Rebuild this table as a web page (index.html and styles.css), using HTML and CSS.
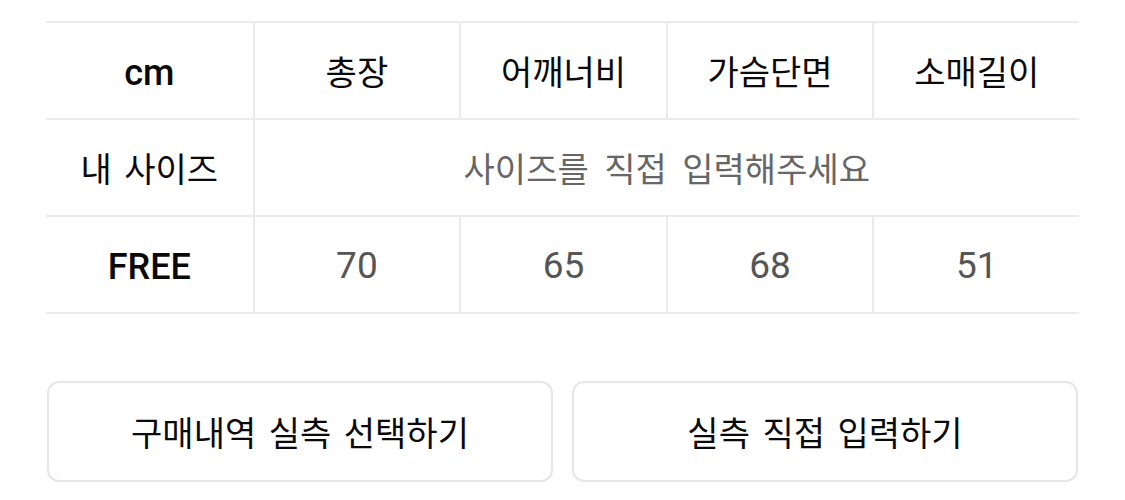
FILE: index.html
```html
<!DOCTYPE html>
<html lang="ko">
<head>
<meta charset="utf-8">
<link rel="stylesheet" href="styles.css">
</head>
<body>
<div class="page">
  <div class="size-table">
    <div class="cell head latin">cm</div>
    <div class="cell head sep">총장</div>
    <div class="cell head sep">어깨너비</div>
    <div class="cell head sep">가슴단면</div>
    <div class="cell head sep">소매길이</div>

    <div class="cell label">내 사이즈</div>
    <div class="cell placeholder sep span4">사이즈를 직접 입력해주세요</div>

    <div class="cell label latin">FREE</div>
    <div class="cell value sep">70</div>
    <div class="cell value sep">65</div>
    <div class="cell value sep">68</div>
    <div class="cell value sep">51</div>
  </div>
  <div class="actions">
    <button class="btn" type="button">구매내역 실측 선택하기</button>
    <button class="btn" type="button">실측 직접 입력하기</button>
  </div>
</div>
</body>
</html>
```

FILE: styles.css
```css
html, body {
  margin: 0;
  padding: 0;
  background: #ffffff;
}

body {
  font-family: Roboto, "Noto Sans CJK KR", sans-serif;
  color: #111111;
}

.page {
  width: 1033px;
  margin-left: 46px;
  padding-top: 21px;
}

.size-table {
  display: grid;
  grid-template-columns: repeat(5, 1fr);
  border-top: 2px solid #ebebeb;
}

.cell {
  box-sizing: border-box;
  height: 97px;
  border-bottom: 2px solid #ebebeb;
  display: flex;
  align-items: center;
  justify-content: center;
  font-family: "Noto Sans CJK KR", sans-serif;
  font-size: 34px;
  font-weight: 400;
  color: #0a0a0a;
  word-spacing: 3px;
}

.cell.sep {
  border-left: 2px solid #ebebeb;
}

.cell.span4 {
  grid-column: span 4;
}

.cell.latin {
  font-family: Roboto, sans-serif;
  font-size: 36px;
  font-weight: 500;
  padding-top: 4px;
}

.cell.placeholder {
  color: #666666;
  word-spacing: 6px;
}

.cell.value {
  font-family: Roboto, sans-serif;
  font-size: 37px;
  font-weight: 400;
  color: #555555;
  padding-top: 2px;
}

.actions {
  display: flex;
  gap: 19px;
  margin-top: 67px;
  padding: 0 1px;
}

.btn {
  flex: 1;
  height: 101px;
  background: #ffffff;
  border: 2px solid #e6e6e6;
  border-radius: 12px;
  font-family: "Noto Sans CJK KR", sans-serif;
  font-size: 34px;
  font-weight: 400;
  color: #0a0a0a;
  word-spacing: 3px;
  padding: 0;
}
```
